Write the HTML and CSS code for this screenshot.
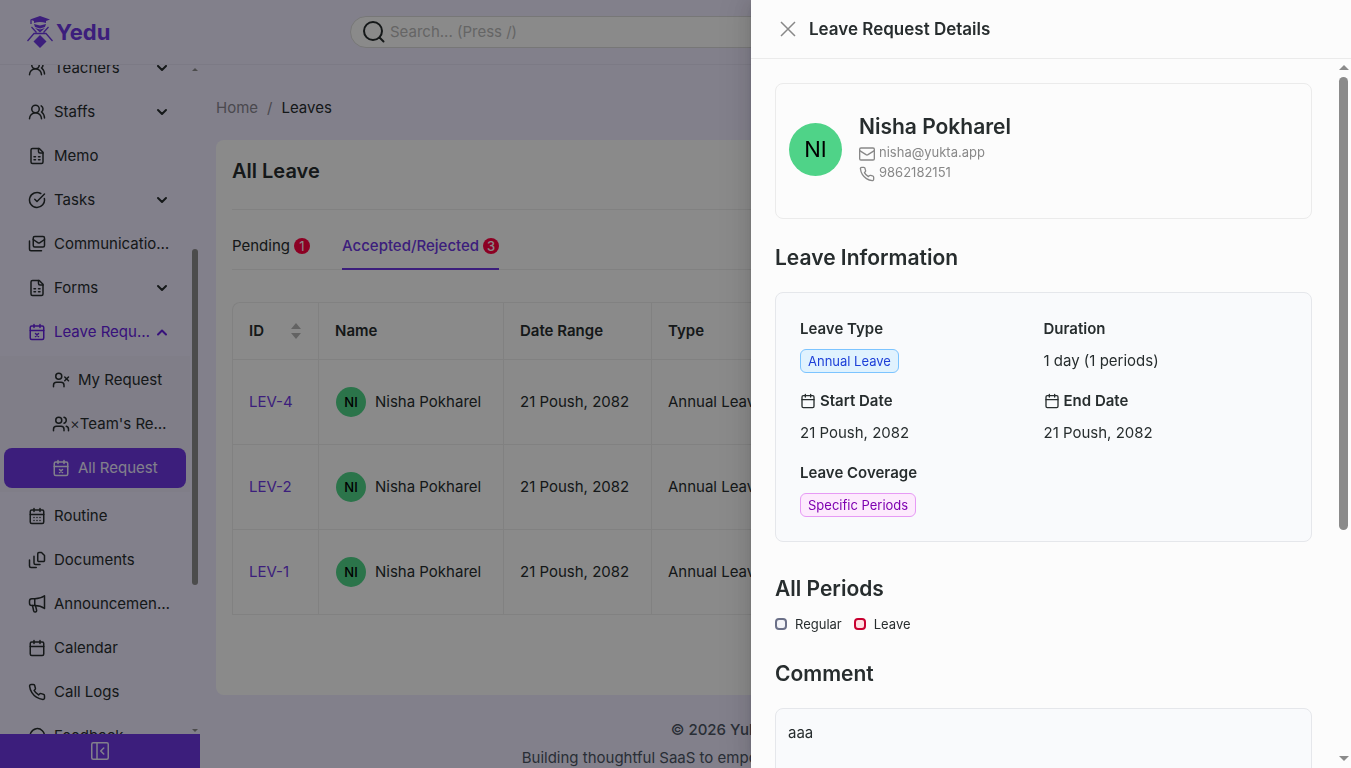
FILE: index.html
```html
<!DOCTYPE html>
<html lang="en">

<head>
    <meta charset="UTF-8">
    <meta name="viewport" content="width=device-width, initial-scale=1.0">
    <title>Yedu - Leaves</title>
    <link rel="stylesheet" href="styles.css">
</head>

<body>
    <!-- shared icons -->
    <svg class="sprite" aria-hidden="true">
        <symbol id="users" viewBox="0 0 24 24"><path d="M18 21a8 8 0 0 0-16 0"/><circle cx="10" cy="8" r="5"/><path d="M22 20c0-3.37-2-6.5-4-8a5 5 0 0 0-.45-8.3"/></symbol>
        <symbol id="sheet" viewBox="0 0 24 24"><path d="M15 2H6a2 2 0 0 0-2 2v16a2 2 0 0 0 2 2h12a2 2 0 0 0 2-2V7Z"/><path d="M14 2v4a2 2 0 0 0 2 2h4M8 13h2M14 13h2M8 17h2M14 17h2"/></symbol>
        <symbol id="check" viewBox="0 0 24 24"><path d="M21.8 10A10 10 0 1 1 17 3.34"/><path d="m9 11 3 3L22 4"/></symbol>
        <symbol id="mails" viewBox="0 0 24 24"><rect x="7" y="2" width="15" height="14" rx="2"/><path d="m22 6-6.500 4.500a2 2 0 0 1-2 0L7 6"/><path d="M2 8v11a2 2 0 0 0 2 2h14"/></symbol>
        <symbol id="cal" viewBox="0 0 24 24"><path d="M8 2v4M16 2v4M3 10h18"/><rect x="3" y="4" width="18" height="18" rx="2"/></symbol>
        <symbol id="cal-x" viewBox="0 0 24 24"><path d="M8 2v4M16 2v4M3 10h18"/><rect x="3" y="4" width="18" height="18" rx="2"/><path d="m14 14-4 4M10 14l4 4"/></symbol>
        <symbol id="cal-days" viewBox="0 0 24 24"><path d="M8 2v4M16 2v4M3 10h18"/><rect x="3" y="4" width="18" height="18" rx="2"/><path d="M8 14h.01M12 14h.01M16 14h.01M8 18h.01M12 18h.01M16 18h.01"/></symbol>
        <symbol id="user-x" viewBox="0 0 24 24"><path d="M16 21v-2a4 4 0 0 0-4-4H6a4 4 0 0 0-4 4v2"/><circle cx="9" cy="7" r="4"/><path d="m17 8 5 5M22 8l-5 5"/></symbol>
        <symbol id="team" viewBox="0 0 24 24"><path d="M16 21v-2a4 4 0 0 0-4-4H6a4 4 0 0 0-4 4v2"/><circle cx="9" cy="7" r="4"/><path d="M22 21v-2a4 4 0 0 0-3-3.87M16 3.13a4 4 0 0 1 0 7.75"/></symbol>
        <symbol id="docs" viewBox="0 0 24 24"><path d="M14.5 2H18l4 4v6.5a1.5 1.5 0 0 1-1.5 1.5h-6a1.5 1.5 0 0 1-1.5-1.5v-9A1.5 1.5 0 0 1 14.5 2Z"/><path d="M8 7v9a2 2 0 0 0 2 2h6M2 12v8a2 2 0 0 0 2 2h7"/></symbol>
        <symbol id="megaphone" viewBox="0 0 24 24"><path d="M9 5H5a3 3 0 0 0-3 3v3a3 3 0 0 0 3 3h4c5 0 9 1 13 4V1c-4 3-8 4-13 4Z"/><path d="M9 5v9M6 14l1.500 7a1.800 1.800 0 0 0 4-.5L10 14"/></symbol>
        <symbol id="phone" viewBox="0 0 24 24"><path d="M22 16.92v3a2 2 0 0 1-2.18 2 19.8 19.8 0 0 1-8.63-3.07 19.5 19.5 0 0 1-6-6A19.8 19.8 0 0 1 2.12 4.18 2 2 0 0 1 4.11 2h3a2 2 0 0 1 2 1.72c.13.96.36 1.9.7 2.81a2 2 0 0 1-.45 2.11L8.09 9.91a16 16 0 0 0 6 6l1.27-1.27a2 2 0 0 1 2.11-.45c.91.34 1.85.57 2.81.7A2 2 0 0 1 22 16.92Z"/></symbol>
        <symbol id="mail" viewBox="0 0 24 24"><rect x="1" y="3" width="22" height="18" rx="2"/><path d="m1 7 9.5 6a3 3 0 0 0 3 0L23 7"/></symbol>
        <symbol id="message" viewBox="0 0 24 24"><path d="M7.9 20A9.5 9.5 0 1 0 4 16.1L2 22Z"/></symbol>
        <symbol id="down" viewBox="0 0 24 24"><path d="m4 8 8 8 8-8"/></symbol>
        <symbol id="up" viewBox="0 0 24 24"><path d="m4 17 8-8 8 8"/></symbol>
        <symbol id="search" viewBox="0 0 24 24"><circle cx="11" cy="11" r="9"/><path d="m17.5 17.5 4 4"/></symbol>
        <symbol id="panel" viewBox="0 0 24 24"><rect x="1" y="1" width="22" height="22" rx="2"/><path d="M8 1v22M17 8l-4 4 4 4"/></symbol>
    </svg>

    <header class="topbar">
        <a class="brand" href="#">
            <svg class="logo" viewBox="0 0 26 32" aria-hidden="true">
                <path fill="currentColor" d="M13 0 23 3.5l-4 1.500V7c-4-1.500-8-1.500-12 0V5L3 3.500Z"/>
                <path fill="currentColor" d="m13 19 6.500 6.500L13 32l-6.500-6.500Z"/>
                <path fill="currentColor" d="m7 8 6 1.500L19 8l-1 3-5 1.500L8 11Z"/>
                <path fill="currentColor" d="m8 12 5 1.500 5-1.500-5 4.500Z"/>
                <path fill="none" stroke="currentColor" stroke-width="1.300" d="M4 4v4M4.500 11l5 5.500M21.500 11l-5 5.500M.5 25 7 17.500h12l6.500 7.500"/>
            </svg>
            <span>Yedu</span>
        </a>
        <label class="search">
            <svg class="icon"><use href="#search"/></svg>
            <input type="search" placeholder="Search... (Press /)" aria-label="Search">
        </label>
    </header>

    <div class="layout">
        <aside class="sidebar">
            <div class="side-scroll">
                <nav class="menu">
                    <a class="item" href="#"><svg class="icon"><use href="#users"/></svg><span>Teachers</span><svg class="chev"><use href="#down"/></svg></a>
                    <a class="item" href="#"><svg class="icon"><use href="#users"/></svg><span>Staffs</span><svg class="chev"><use href="#down"/></svg></a>
                    <a class="item" href="#"><svg class="icon"><use href="#sheet"/></svg><span>Memo</span></a>
                    <a class="item" href="#"><svg class="icon"><use href="#check"/></svg><span>Tasks</span><svg class="chev"><use href="#down"/></svg></a>
                    <a class="item" href="#"><svg class="icon"><use href="#mails"/></svg><span>Communications</span></a>
                    <a class="item" href="#"><svg class="icon"><use href="#sheet"/></svg><span>Forms</span><svg class="chev"><use href="#down"/></svg></a>
                    <a class="item open" href="#"><svg class="icon"><use href="#cal-x"/></svg><span>Leave Requests</span><svg class="chev"><use href="#up"/></svg></a>
                    <div class="submenu">
                        <a class="item" href="#"><svg class="icon"><use href="#user-x"/></svg><span>My Request</span></a>
                        <a class="item team" href="#"><svg class="icon"><use href="#team"/></svg><small>×</small><span>Team's Request</span></a>
                        <a class="item active" href="#"><svg class="icon"><use href="#cal-x"/></svg><span>All Request</span></a>
                    </div>
                    <a class="item" href="#"><svg class="icon"><use href="#cal-days"/></svg><span>Routine</span></a>
                    <a class="item" href="#"><svg class="icon"><use href="#docs"/></svg><span>Documents</span></a>
                    <a class="item" href="#"><svg class="icon"><use href="#megaphone"/></svg><span>Announcement Board</span></a>
                    <a class="item" href="#"><svg class="icon"><use href="#cal"/></svg><span>Calendar</span></a>
                    <a class="item" href="#"><svg class="icon"><use href="#phone"/></svg><span>Call Logs</span></a>
                    <a class="item" href="#"><svg class="icon"><use href="#message"/></svg><span>Feedback</span></a>
                </nav>
                <div class="scrollbar side-bar">
                    <i class="arrow-up"></i>
                    <div class="track"><div class="thumb"></div></div>
                    <i class="arrow-down"></i>
                </div>
            </div>
            <button class="collapse" aria-label="Collapse menu"><svg class="icon"><use href="#panel"/></svg></button>
        </aside>

        <main class="main">
            <nav class="breadcrumb"><a href="#">Home</a><span>/</span><b>Leaves</b></nav>
            <section class="card">
                <h1>All Leave</h1>
                <div class="tabs">
                    <button class="tab">Pending <em>1</em></button>
                    <button class="tab on">Accepted/Rejected <em>3</em></button>
                </div>
                <table>
                    <thead>
                        <tr>
                            <th class="col-id"><div class="sorter">ID <svg width="12" height="18" viewBox="0 0 12 18"><path d="m6 1 5 6H1ZM6 17l-5-6h10Z"/></svg></div></th>
                            <th class="col-name">Name</th>
                            <th class="col-date">Date Range</th>
                            <th>Type</th>
                        </tr>
                    </thead>
                    <tbody>
                        <tr>
                            <td><a href="#">LEV-4</a></td>
                            <td><div class="person"><span class="avatar">NI</span>Nisha Pokharel</div></td>
                            <td>21 Poush, 2082</td>
                            <td>Annual Leave</td>
                        </tr>
                        <tr>
                            <td><a href="#">LEV-2</a></td>
                            <td><div class="person"><span class="avatar">NI</span>Nisha Pokharel</div></td>
                            <td>21 Poush, 2082</td>
                            <td>Annual Leave</td>
                        </tr>
                        <tr>
                            <td><a href="#">LEV-1</a></td>
                            <td><div class="person"><span class="avatar">NI</span>Nisha Pokharel</div></td>
                            <td>21 Poush, 2082</td>
                            <td>Annual Leave</td>
                        </tr>
                    </tbody>
                </table>
            </section>
            <footer class="footer">
                <p class="copy">© 2026 Yukta Innovation Inc.</p>
                <p>Building thoughtful SaaS to empower schools, teams and organizations.</p>
            </footer>
        </main>
    </div>

    <div class="mask"></div>

    <div class="drawer" role="dialog" aria-labelledby="drawer-title">
        <div class="drawer-head">
            <button class="close" aria-label="Close"><svg width="16" height="16" viewBox="0 0 16 16"><path d="m1 1 14 14M15 1 1 15"/></svg></button>
            <h2 id="drawer-title">Leave Request Details</h2>
        </div>
        <div class="drawer-main">
            <div class="drawer-body">
                <div class="profile">
                    <span class="avatar large">NI</span>
                    <div class="contact">
                        <h3>Nisha Pokharel</h3>
                        <p><svg class="icon"><use href="#mail"/></svg>nisha@yukta.app</p>
                        <p><svg class="icon"><use href="#phone"/></svg>9862182151</p>
                    </div>
                </div>

                <h3 class="title">Leave Information</h3>
                <dl class="info">
                    <div><dt>Leave Type</dt><dd><span class="tag blue">Annual Leave</span></dd></div>
                    <div><dt>Duration</dt><dd>1 day (1 periods)</dd></div>
                    <div><dt><svg class="icon"><use href="#cal"/></svg>Start Date</dt><dd>21 Poush, 2082</dd></div>
                    <div><dt><svg class="icon"><use href="#cal"/></svg>End Date</dt><dd>21 Poush, 2082</dd></div>
                    <div><dt>Leave Coverage</dt><dd><span class="tag purple">Specific Periods</span></dd></div>
                </dl>

                <h3 class="title periods">All Periods</h3>
                <div class="legend">
                    <span><i></i>Regular</span>
                    <span><i class="leave"></i>Leave</span>
                </div>

                <h3 class="title">Comment</h3>
                <div class="comment">aaa</div>
            </div>
            <div class="scrollbar drawer-bar">
                <i class="arrow-up"></i>
                <div class="track"><div class="thumb"></div></div>
                <i class="arrow-down"></i>
            </div>
        </div>
    </div>
</body>

</html>
```
FILE: styles.css
```css
* {
    box-sizing: border-box;
    margin: 0;
    padding: 0;
}

body {
    height: 100vh;
    display: flex;
    flex-direction: column;
    overflow: hidden;
    font-family: Inter, "Liberation Sans", sans-serif;
    font-size: 15px;
    line-height: 24px;
    color: #272d2e;
    background-color: #ede9fe;
}

a {
    color: inherit;
    text-decoration: none;
}

button {
    font: inherit;
    color: inherit;
    border: 0;
    background: none;
    cursor: pointer;
}

.sprite {
    position: absolute;
    width: 0;
    height: 0;
}

.icon,
.chev {
    flex: none;
    width: 18px;
    height: 18px;
    fill: none;
    stroke: currentColor;
    stroke-width: 2;
    stroke-linecap: round;
    stroke-linejoin: round;
}

/* top bar */
.topbar {
    flex: none;
    display: flex;
    align-items: center;
    height: 65px;
    padding-left: 27px;
    border-bottom: 1px solid #e2def2;
}

.brand {
    display: flex;
    align-items: center;
    gap: 3px;
    width: 323px;
    color: #6d38e2;
    font-size: 22px;
    font-weight: 700;
}

.logo {
    width: 26px;
    height: 32px;
}

.search {
    display: flex;
    align-items: center;
    gap: 4px;
    width: 652px;
    height: 32px;
    padding: 0 11px;
    border: 1px solid #d9d9d9;
    border-radius: 16px;
    background-color: #fcfcfc;
}

.search .icon {
    width: 24px;
    height: 24px;
}

.search input {
    flex: 1;
    border: 0;
    outline: 0;
    font: inherit;
    background: none;
}

.search input::placeholder {
    color: #b8b8b8;
}

/* sidebar */
.layout {
    flex: 1;
    display: flex;
    min-height: 0;
}

.sidebar {
    flex: none;
    display: flex;
    flex-direction: column;
    width: 200px;
}

.side-scroll {
    flex: 1;
    display: flex;
    min-height: 0;
    overflow: hidden;
}

.menu {
    flex: 1;
    min-width: 0;
    margin-top: -17px;
}

.item {
    display: flex;
    align-items: center;
    gap: 8px;
    height: 40px;
    margin: 0 4px 4px;
    padding: 0 16px 0 24px;
    border-radius: 8px;
}

.item span {
    flex: 1;
    overflow: hidden;
    white-space: nowrap;
    text-overflow: ellipsis;
}

.item.open {
    color: #6520e0;
}

.chev {
    width: 12px;
    height: 12px;
    margin: 0 2px 0 -6px;
    stroke-width: 4;
}

.submenu {
    margin-bottom: 4px;
    padding-top: 4px;
    background-color: #e9e5f8;
    overflow: hidden;
}

.submenu .item {
    padding-left: 48px;
}

.submenu .team {
    gap: 0;
}

.submenu small {
    font-size: 15px;
    font-weight: 300;
}

.item.active {
    color: #ede9fe;
    background-color: #6d38e2;
}

.collapse {
    display: flex;
    align-items: center;
    justify-content: center;
    height: 34px;
    color: #ede9fe;
    background-color: #6d38e2;
}

/* scrollbars */
.scrollbar {
    flex: none;
    display: flex;
    flex-direction: column;
    align-items: center;
    color: #8b8b8b;
}

.arrow-up,
.arrow-down {
    border: 5px solid transparent;
}

.arrow-up {
    border-top: 0;
    border-bottom-color: currentColor;
}

.arrow-down {
    border-bottom: 0;
    border-top-color: currentColor;
}

.track {
    flex: 1;
    align-self: stretch;
}

.thumb {
    border-radius: 5px;
    background-color: currentColor;
}

.side-bar {
    width: 10px;
    padding: 3px 2px 2px;
}

.side-bar .arrow-up,
.side-bar .arrow-down {
    border-width: 3px;
}

.side-bar .track {
    display: flex;
    flex-direction: column;
    justify-content: center;
}

.side-bar .thumb {
    height: 51%;
    margin-top: 34px;
}

/* page */
.main {
    flex: 1;
    display: flex;
    flex-direction: column;
    min-width: 0;
    padding: 31px 16px 0;
}

.breadcrumb {
    display: flex;
    gap: 9px;
    margin-bottom: 20px;
    color: #87858f;
}

.breadcrumb b {
    font-weight: 400;
    color: #272d2e;
}

.card {
    flex: none;
    padding: 0 16px 80px;
    border-radius: 8px;
    background-color: #fcfcfc;
}

.card h1 {
    padding: 15px 0 22px;
    border-bottom: 1px solid #ebebeb;
    font-size: 20px;
    font-weight: 600;
    line-height: 32px;
}

.tabs {
    display: flex;
    gap: 32px;
    margin-bottom: 32px;
    padding-top: 12px;
    border-bottom: 1px solid #ebebeb;
}

.tab {
    display: flex;
    align-items: center;
    gap: 4px;
    height: 48px;
    margin-bottom: -1px;
    padding-top: 2px;
    border-bottom: 2px solid transparent;
}

.tab.on {
    font-weight: 500;
    color: #6d38e2;
    border-color: #6d38e2;
}

.tab em {
    width: 16px;
    height: 16px;
    border-radius: 50%;
    font-size: 13px;
    font-style: normal;
    line-height: 16px;
    color: #fcfcfc;
    background-color: #ff0040;
}

table {
    width: 100%;
    table-layout: fixed;
    border-spacing: 0;
    border: 1px solid #ebebeb;
    border-width: 1px 0 0 1px;
    border-radius: 8px 0 0 0;
}

th,
td {
    height: 85px;
    padding: 0 16px;
    border: 1px solid #ebebeb;
    border-width: 0 1px 1px 0;
    text-align: left;
}

th {
    height: 57px;
    font-weight: 600;
}

td a {
    color: #6d38e2;
}

.col-id {
    width: 86px;
}

.col-name {
    width: 185px;
}

.col-date {
    width: 148px;
}

.sorter {
    display: flex;
    align-items: center;
    justify-content: space-between;
}

.sorter svg {
    fill: #b5b5b5;
}

.person {
    display: flex;
    align-items: center;
    gap: 9px;
    padding-left: 1px;
    white-space: nowrap;
}

.avatar {
    flex: none;
    width: 30px;
    height: 30px;
    border-radius: 50%;
    font-size: 13px;
    font-weight: 500;
    line-height: 30px;
    text-align: center;
    color: #000;
    background-color: #4fd388;
}

.footer {
    padding-top: 23px;
    text-align: center;
    color: #4b5563;
}

.footer p {
    margin-bottom: 4px;
}

.footer .copy {
    font-weight: 500;
}

/* drawer */
.mask {
    position: fixed;
    inset: 0;
    background-color: rgba(0, 0, 0, 0.45);
}

.drawer {
    position: fixed;
    top: 0;
    right: 0;
    bottom: 0;
    display: flex;
    flex-direction: column;
    width: 600px;
    max-width: 100%;
    background-color: #fcfcfc;
    box-shadow: -6px 0 16px 0 rgba(0, 0, 0, 0.08), -3px 0 6px -4px rgba(0, 0, 0, 0.12), -9px 0 28px 8px rgba(0, 0, 0, 0.05);
}

.drawer-head {
    display: flex;
    align-items: center;
    gap: 8px;
    height: 59px;
    padding: 0 24px;
    border-bottom: 1px solid #ebebeb;
}

.drawer-head h2 {
    font-size: 17px;
    font-weight: 600;
}

.close {
    display: flex;
    padding: 5px;
}

.close svg {
    fill: none;
    stroke: #888;
    stroke-width: 1.5;
}

.drawer-main {
    flex: 1;
    display: flex;
    min-height: 0;
    overflow: hidden;
}

.drawer-body {
    flex: 1;
    padding: 24px;
}

.drawer-bar {
    width: 15px;
    padding: 6px 3px 7px;
}

.drawer-bar .thumb {
    height: 66%;
    margin-top: 7px;
}

.profile {
    display: flex;
    align-items: center;
    gap: 17px;
    height: 136px;
    padding: 0 13px 3px;
    border: 1px solid #ebebeb;
    border-radius: 8px;
}

.avatar.large {
    width: 53px;
    height: 53px;
    font-size: 22px;
    font-weight: 400;
    line-height: 53px;
}

.contact {
    padding-bottom: 6px;
}

.profile h3,
.title {
    font-size: 21px;
    font-weight: 600;
    line-height: 30px;
}

.profile p {
    display: flex;
    gap: 4px;
    font-size: 13px;
    line-height: 20px;
    color: #888;
}

.profile .icon {
    width: 16px;
    height: 16px;
    margin-top: 4px;
}

.title {
    margin: 24px 0 19px;
}

.info {
    display: grid;
    grid-template-columns: 1fr 1fr;
    row-gap: 16px;
    padding: 24px;
    border: 1px solid #e5e7eb;
    border-radius: 8px;
    background-color: #f9fafc;
}

.info dt {
    display: flex;
    align-items: center;
    gap: 4px;
    margin-bottom: 8px;
    font-weight: 600;
}

.info .icon {
    width: 16px;
    height: 16px;
}

.tag {
    display: block;
    width: fit-content;
    padding: 0 7px;
    border: 1px solid;
    border-radius: 6px;
    font-size: 13px;
    line-height: 22px;
}

.tag.blue {
    color: #1d3fd8;
    border-color: #7cc4ff;
    background-color: #e0f2fe;
}

.tag.purple {
    color: #7e00b0;
    border-color: #e79af5;
    background-color: #fdeafd;
}

.title.periods {
    margin: 32px 0 9px;
}

.legend {
    display: flex;
    gap: 12px;
    font-size: 13px;
    line-height: 22px;
}

.legend span {
    display: flex;
    align-items: center;
    gap: 8px;
}

.legend i {
    width: 12px;
    height: 12px;
    border: 2px solid #6b7088;
    border-radius: 4px;
    background-color: #f3f4f8;
}

.legend .leave {
    border-color: #c80030;
    background-color: #ffdfe2;
}

.comment {
    height: 96px;
    padding: 12px;
    border: 1px solid #e5e7eb;
    border-radius: 8px;
    background-color: #f9fafc;
}
```
